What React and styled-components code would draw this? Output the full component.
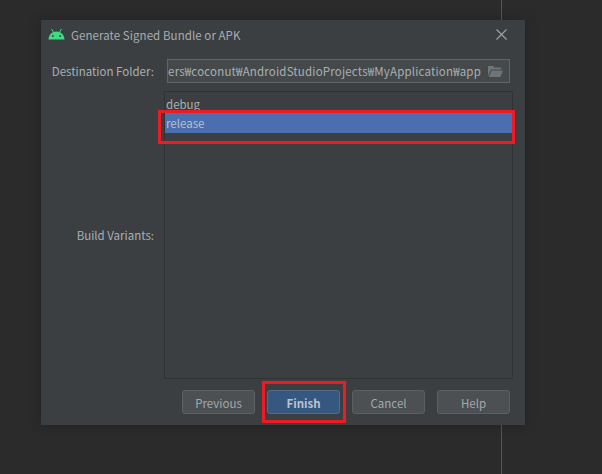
import React from 'react'
import styled, { createGlobalStyle } from 'styled-components'

const GlobalStyle = createGlobalStyle`
    html, body {
        margin: 0;
        padding: 0;
        background: #2b2b2b;
    }
    #root {
        font-family: "Noto Sans CJK KR", "Noto Sans", sans-serif;
    }
`

const Page = styled.div`
    width: 602px;
    height: 474px;
    box-sizing: border-box;
    padding: 20px 0 0 41px;
    overflow: hidden;
    background: linear-gradient(#555, #555) 501px 0 / 1px 100% no-repeat, #2b2b2b;
`

const Dialog = styled.div`
    position: relative;
    width: 484px;
    height: 405px;
    box-sizing: border-box;
    background: #3c3f41;
    box-shadow: 0 0 12px rgba(0, 0, 0, 0.22);
    display: flex;
    flex-direction: column;
    color: #a9b0b3;
    font-size: 11.5px;
`

const TitleBar = styled.div`
    height: 29px;
    display: flex;
    align-items: center;
    padding: 0 18px 0 7px;
    gap: 6px;
`

const Title = styled.span`
    flex: 1;
    color: #a8adb0;
    letter-spacing: 0.07px;
`

const Body = styled.div`
    flex: 1;
    display: flex;
    flex-direction: column;
    padding: 10px 12px 0 0;
`

const FieldRow = styled.div`
    display: flex;
`

const Label = styled.label`
    width: 113px;
    margin-top: ${(props) => props.$offset || 0}px;
    text-align: right;
    flex: none;
    align-self: center;
    line-height: 16px;
`

const PathInput = styled.div`
    margin-left: 13px;
    width: 343px;
    height: 24px;
    box-sizing: border-box;
    border: 1px solid #646464;
    background: #45494a;
    display: flex;
    align-items: center;
    overflow: hidden;
    padding-right: 6px;
    gap: 7px;
`

const PathText = styled.div`
    flex: 1;
    min-width: 0;
    text-align: right;
    white-space: nowrap;
    color: #a9b0b3;
    line-height: 16px;
    letter-spacing: 0.18px;
`

const VariantList = styled.div`
    margin: 8px 0 0 10px;
    width: 349px;
    height: 288px;
    box-sizing: border-box;
    border: 1px solid #323232;
    padding-top: 2px;
    background: #3c3f41;
`

const Variant = styled.div`
    height: ${(props) => (props.$selected ? 20 : 19)}px;
    line-height: 21px;
    padding-left: 1px;
    background: ${(props) => (props.$selected ? '#4b6eaf' : 'transparent')};
    color: ${(props) => (props.$selected ? '#b6c0d2' : '#a9b0b3')};
`

const Footer = styled.div`
    display: flex;
    justify-content: flex-end;
    gap: 12px;
    padding: 11px 15px 11px 0;
`

const Button = styled.button`
    width: 73px;
    height: 24px;
    box-sizing: border-box;
    padding: 1px 0 0;
    border-radius: 3px;
    font-family: inherit;
    font-size: 11.5px;
    font-weight: ${(props) => (props.$primary ? 700 : 400)};
    border: 1px solid ${(props) => (props.$primary ? '#4c708c' : '#5e6060')};
    background: ${(props) => (props.$primary ? '#365880' : '#4c5052')};
    color: ${(props) => (props.$primary ? '#b9c4cf' : '#a3a9ab')};
`

const CloseButton = styled.svg`
    width: 11px;
    height: 11px;
    flex: none;
`

const Highlight = styled.div`
    position: absolute;
    box-sizing: border-box;
    border: 3px solid #ed1c24;
    left: ${(props) => props.$left}px;
    top: ${(props) => props.$top}px;
    width: ${(props) => props.$width}px;
    height: ${(props) => props.$height}px;
`

const AndroidIcon = () => (
    <svg width="17" height="14" viewBox="0 0 17 14" style={{ flex: 'none' }}>
        <path d="M0.5 11.6 C0.8 6.8 4 3.6 8.5 3.6 C13 3.6 16.2 6.8 16.5 11.6 Z" fill="#3ddc84" />
        <path d="M3.6 1 L5.4 4.2 M13.4 1 L11.6 4.2" stroke="#3ddc84" strokeWidth="1" />
        <circle cx="4.8" cy="8" r="0.9" fill="#3c3f41" />
        <circle cx="12.2" cy="8" r="0.9" fill="#3c3f41" />
    </svg>
)

const FolderIcon = () => (
    <svg width="15" height="12" viewBox="0 0 15 12" style={{ flex: 'none' }}>
        <path d="M0 1 H5 L6.5 2.5 H13 V4.5 H3 L0 11 Z" fill="#6f7476" />
        <path d="M3.6 5.5 H15 L12.4 12 H0.8 Z" fill="#6f7476" />
    </svg>
)

export default function App() {
    return (
        <Page>
            <GlobalStyle />
            <Dialog>
                <TitleBar>
                    <AndroidIcon />
                    <Title>Generate Signed Bundle or APK</Title>
                    <CloseButton viewBox="0 0 11 11">
                        <path d="M0.5 0.5 L10.5 10.5 M10.5 0.5 L0.5 10.5" stroke="#a0a3a5" strokeWidth="1.1" />
                    </CloseButton>
                </TitleBar>
                <Body>
                    <FieldRow>
                        <Label>Destination Folder:</Label>
                        <PathInput>
                            <PathText>ers₩coconut₩AndroidStudioProjects₩MyApplication₩app</PathText>
                            <FolderIcon />
                        </PathInput>
                    </FieldRow>
                    <FieldRow>
                        <Label $offset={8}>Build Variants:</Label>
                        <VariantList>
                            <Variant>debug</Variant>
                            <Variant $selected>release</Variant>
                        </VariantList>
                    </FieldRow>
                </Body>
                <Footer>
                    <Button>Previous</Button>
                    <Button $primary>Finish</Button>
                    <Button>Cancel</Button>
                    <Button>Help</Button>
                </Footer>
                <Highlight $left={117} $top={90} $width={357} $height={34} />
                <Highlight $left={221} $top={361} $width={84} $height={42} />
            </Dialog>
        </Page>
    )
}
